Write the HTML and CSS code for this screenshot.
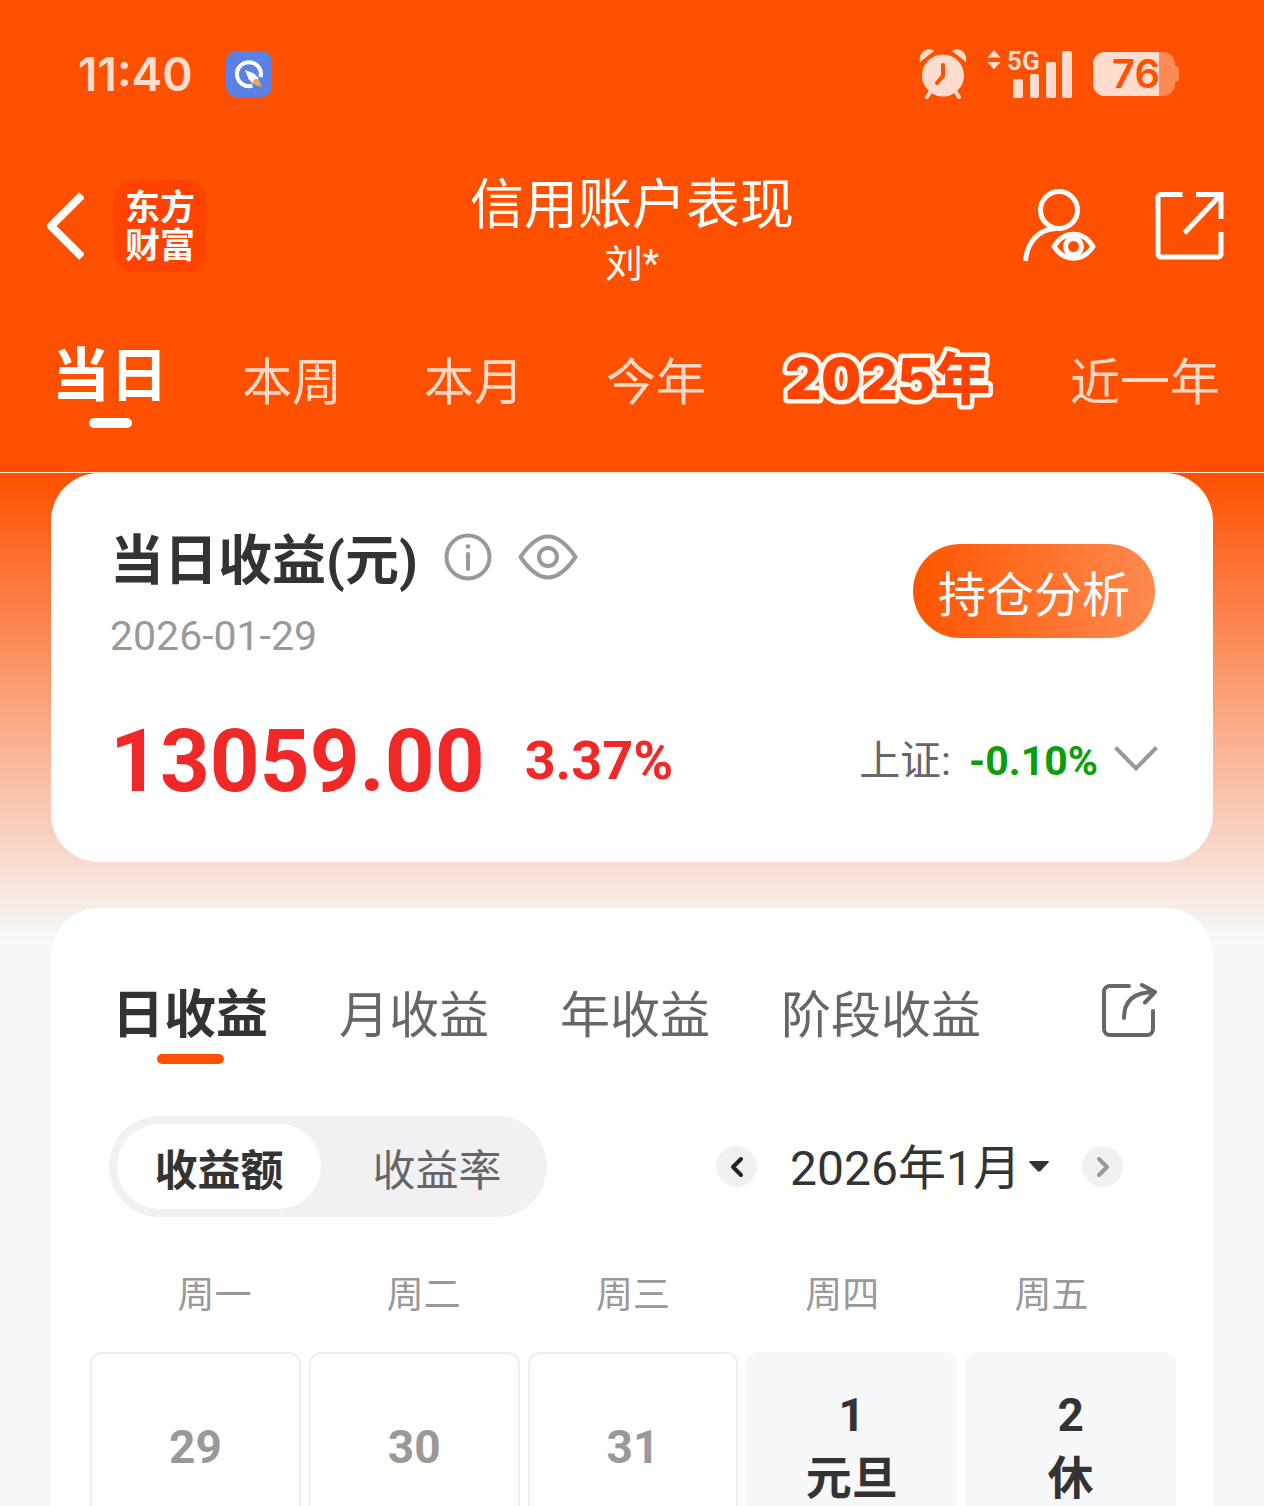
FILE: index.html
```html
<!DOCTYPE html>
<html lang="zh-CN">
<head>
<meta charset="utf-8">
<meta name="viewport" content="width=device-width, initial-scale=1">
<title>信用账户表现</title>
<link rel="stylesheet" href="styles.css">
</head>
<body>
<div class="app">
  <header class="top">
    <div class="status">
      <div class="status-side">
        <span class="clock">11:40</span>
        <svg class="app-badge" width="48" height="48" viewBox="0 0 48 48" aria-hidden="true">
          <rect x="1" y="1" width="46" height="46" rx="11" fill="#5a82e6"/>
          <path d="M27.5 35.6A12 12 0 1 1 35.6 27" fill="none" stroke="#fff" stroke-width="4"/>
          <path d="M20 20l9 3.500 5 5-5.500 5.500-5-5z" fill="#fff"/>
          <path d="M28 32c0-3 4-4 6-1.500 1.500 2 2 4 2.500 6.500-3-.4-8-1.500-8.500-5z" fill="#e8a94d"/>
        </svg>
      </div>
      <div class="status-side status-right">
        <svg width="48" height="52" viewBox="0 0 48 52" aria-hidden="true">
          <g fill="#ffdccd"><circle cx="24" cy="27.500" r="21"/>
          <path d="M1 14C-1 5 8-2 15 3zM47 14C49 5 40-2 33 3z"/></g>
          <path d="M12 43l-4 6M36 43l4 6" stroke="#ffdccd" stroke-width="4" stroke-linecap="round"/>
          <path d="M24 17v11l-6 7" fill="none" stroke="#ff5000" stroke-width="4" stroke-linecap="round" stroke-linejoin="round"/>
        </svg>
        <div class="signal">
          <svg width="14" height="20" viewBox="0 0 14 20" fill="#ffdccd" aria-hidden="true"><path d="M7 0l6.500 7.500H.5zM7 19.500L.5 12h13z"/></svg>
          <span class="net">5G</span>
          <svg class="bars" width="60" height="48" viewBox="0 0 60 48" fill="#ffdccd" aria-hidden="true"><rect x="0" y="29" width="10" height="19" rx="2"/><rect x="17" y="24" width="9" height="24" rx="2"/><rect x="33" y="12" width="10" height="36" rx="2"/><rect x="49" y="1" width="10" height="47" rx="2"/></svg>
        </div>
        <div class="battery"><span>76</span></div>
      </div>
    </div>
    <div class="nav">
      <div class="nav-side">
        <button class="icon-btn" aria-label="返回"><svg width="44" height="70" viewBox="0 0 44 70" fill="none" stroke="#fff" stroke-width="8" stroke-linejoin="round"><path d="M42 4L11 35l31 31"/></svg></button>
        <a class="brand" href="#">东方<br>财富</a>
      </div>
      <div class="heading">
        <h1>信用账户表现</h1>
        <p>刘*</p>
      </div>
      <div class="nav-side nav-right">
        <button class="icon-btn" aria-label="账户"><svg width="76" height="76" viewBox="0 0 76 76" fill="none" stroke="#fff" stroke-width="5"><circle cx="39" cy="22" r="18.500"/><path d="M5.500 73C7 54 19 41 36 40.500"/><path d="M34 58.500C44 42 63 42 73 58.500 63 74 44 74 34 58.500z" stroke-linejoin="round"/><circle cx="53.500" cy="58.500" r="8"/></svg></button>
        <button class="icon-btn" aria-label="分享"><svg width="70" height="70" viewBox="0 0 70 70" fill="none" stroke="#fff" stroke-width="5"><path d="M28.500 3.500H7a3 3 0 0 0-3 3V63a3 3 0 0 0 3 3h57a3 3 0 0 0 3-3V41M42 3.500h25V28M67 3.500L30.500 42"/></svg></button>
      </div>
    </div>
    <nav class="periods">
      <a class="period active" href="#">当日</a>
      <a class="period" href="#">本周</a>
      <a class="period" href="#">本月</a>
      <a class="period" href="#">今年</a>
      <a class="period special" href="#"><svg width="210" height="76" viewBox="0 0 210 76"><text x="2" y="59">2025年</text></svg></a>
      <a class="period" href="#">近一年</a>
    </nav>
  </header>

  <main class="content">
    <section class="card summary">
      <div class="summary-head">
        <div>
          <div class="title-row">
            <h2>当日收益(元)</h2>
            <button class="icon-btn" aria-label="说明"><svg width="48" height="48" viewBox="0 0 48 48" fill="none" stroke="#999" stroke-width="4"><circle cx="24" cy="24" r="21.500"/><path d="M24 21v15" stroke-linecap="round"/><circle cx="24" cy="13.500" r="2.300" fill="#999" stroke="none"/></svg></button>
            <button class="icon-btn" aria-label="隐藏金额"><svg width="60" height="48" viewBox="0 0 60 48" fill="none" stroke="#999" stroke-width="4"><path d="M2.500 24C8 16 18 3.500 30 3.500S52 16 57.500 24C52 32 42 44.500 30 44.500S8 32 2.500 24z" stroke-linejoin="round"/><circle cx="30" cy="24" r="9"/></svg></button>
          </div>
          <p class="date">2026-01-29</p>
        </div>
        <button class="analyse">持仓分析</button>
      </div>
      <div class="figures">
        <span class="amount">13059.00</span>
        <span class="rate">3.37%</span>
        <button class="index">上证: <strong>-0.10%</strong><svg width="44" height="32" viewBox="0 0 44 32" fill="none" stroke="#999" stroke-width="4"><path d="M1.500 2.500L22 23.500 42.500 2.500"/></svg></button>
      </div>
    </section>

    <section class="card earnings">
      <div class="earn-head">
        <nav class="earn-tabs">
          <a class="earn-tab active" href="#">日收益</a>
          <a class="earn-tab" href="#">月收益</a>
          <a class="earn-tab" href="#">年收益</a>
          <a class="earn-tab" href="#">阶段收益</a>
        </nav>
        <button class="icon-btn" aria-label="分享收益"><svg width="56" height="56" viewBox="0 0 56 56" fill="none" stroke="#666" stroke-width="4" stroke-linecap="round" stroke-linejoin="round"><path d="M28 3H9a6 6 0 0 0-6 6v37a6 6 0 0 0 6 6h37a6 6 0 0 0 6-6V28"/><path d="M23 35C23 19 32 9 53 9M41 2l13 7-10 10.500"/></svg></button>
      </div>
      <div class="controls">
        <div class="segment">
          <button class="seg active">收益额</button>
          <button class="seg">收益率</button>
        </div>
        <div class="month">
          <button class="step" aria-label="上个月"><svg width="14" height="22" viewBox="0 0 14 22" fill="none" stroke="#222" stroke-width="4" stroke-linecap="round" stroke-linejoin="round"><path d="M11 3L3 11l8 8"/></svg></button>
          <label class="month-pick">
            <select aria-label="月份"><option>2026年1月</option></select>
            <svg width="20" height="12" viewBox="0 0 20 12" fill="#333"><path d="M1 0h18q1.500 0 .5 1.500l-8 8.500q-1.500 1-3 0l-8-8.500Q-.5 0 1 0z"/></svg>
          </label>
          <button class="step" aria-label="下个月"><svg width="14" height="22" viewBox="0 0 14 22" fill="none" stroke="#999" stroke-width="4" stroke-linecap="round" stroke-linejoin="round"><path d="M3 3l8 8-8 8"/></svg></button>
        </div>
      </div>
      <div class="weekdays"><span>周一</span><span>周二</span><span>周三</span><span>周四</span><span>周五</span></div>
      <div class="days">
        <div class="day outside">29</div>
        <div class="day outside">30</div>
        <div class="day outside">31</div>
        <div class="day"><span>1</span><span>元旦</span></div>
        <div class="day"><span>2</span><span>休</span></div>
      </div>
    </section>
  </main>
</div>
</body>
</html>
```

FILE: styles.css
```css
* { box-sizing: border-box; }
body {
  margin: 0;
  background: #f7f8fa;
  color: #333;
  font-family: Roboto, "Noto Sans CJK SC", sans-serif;
}
h1, h2, p { margin: 0; }
a { color: inherit; text-decoration: none; }
button, select {
  margin: 0;
  padding: 0;
  border: 0;
  background: none;
  color: inherit;
  font: inherit;
}
svg { display: block; flex: none; }
.icon-btn { display: flex; }

.app { display: flex; flex-direction: column; height: 100vh; }

/* Header */
.top {
  flex: none;
  background: #ff5000;
  border-bottom: 1px solid #ffe3d6;
  color: #fff;
}
.status {
  display: flex;
  justify-content: space-between;
  align-items: center;
  height: 148px;
  padding: 0 89px 0 78px;
  color: #ffdccd;
}
.status-side { display: flex; align-items: center; gap: 32px; }
.status-right { gap: 20px; }
.clock { font: 600 46px/64px Inter, sans-serif; }
.signal { display: grid; grid-template-columns: 14px 66px; column-gap: 6px; }
.signal > * { grid-row: 1; }
.net { grid-column: 2; font: 700 26px/22px Roboto, sans-serif; }
.bars { grid-column: 2; justify-self: end; }
.battery {
  position: relative;
  width: 82px;
  height: 44px;
  padding-left: 4px;
  border-radius: 12px;
  background: linear-gradient(to right, #ffdccd 66px, #ff8a55 66px);
  color: #ff5000;
  font: 600 40px/44px Inter, sans-serif;
  text-align: center;
}
.battery::after {
  content: "";
  position: absolute;
  top: 14px;
  right: -4px;
  width: 4px;
  height: 16px;
  border-radius: 0 4px 4px 0;
  background: #ff8a55;
}
.nav {
  display: grid;
  grid-template-columns: 1fr auto 1fr;
  align-items: center;
  height: 156px;
  padding: 0 40px;
}
.nav-side { display: flex; align-items: center; gap: 30px; }
.nav-right { justify-content: flex-end; gap: 58px; }
.brand {
  width: 92px;
  height: 92px;
  padding: 10px 0;
  border-radius: 20px;
  background: #ff4200;
  font-size: 35px;
  font-weight: 700;
  line-height: 38px;
  text-align: center;
}
.heading { padding-top: 12px; text-align: center; }
.heading h1 { font-size: 54px; font-weight: 400; line-height: 64px; }
.heading p { font-size: 38px; line-height: 52px; }
.periods {
  display: flex;
  gap: 82px;
  height: 168px;
  padding: 36px 0 0 52px;
  overflow: hidden;
}
.period { flex: none; color: #ffd9c7; font-size: 50px; line-height: 86px; white-space: nowrap; }
.period.active { margin-right: -8px; color: #fff; font-size: 58px; font-weight: 700; line-height: 72px; }
.period.active::after,
.earn-tab.active::after {
  content: "";
  display: block;
  width: 43px;
  height: 10px;
  margin: 6px auto 0;
  border-radius: 5px;
  background: #fff;
}
.period.special { margin: 0 -5px; }
.special svg { overflow: visible; }
.special text {
  fill: #ff4200;
  stroke: #fff8f0;
  stroke-width: 9px;
  stroke-linejoin: round;
  paint-order: stroke fill;
  font-family: Inter, "Noto Sans CJK SC", sans-serif;
  font-size: 56px;
  font-weight: 900;
}

/* Scrolling content */
.content {
  flex: 1;
  min-height: 0;
  overflow: hidden auto;
  scrollbar-width: none;
  padding: 0 51px 46px;
  background: linear-gradient(#ff5000, #f7f8fa 468px);
}
.card { border-radius: 48px; background: #fff; }
.summary { height: 389px; padding: 48px 55px 0 59px; }
.summary-head { display: flex; justify-content: space-between; align-items: flex-start; }
.title-row { display: flex; align-items: center; gap: 26px; height: 72px; }
.title-row h2 { padding-top: 10px; font-size: 54px; font-weight: 700; line-height: 72px; }
.date { color: #999; font-size: 41px; line-height: 86px; }
.analyse {
  width: 242px;
  height: 94px;
  margin: 23px 3px 0 0;
  border-radius: 47px;
  background: linear-gradient(to right, #ff5500, #ff8a50);
  color: #fff;
  font-size: 48px;
}
.figures { display: flex; align-items: center; margin-top: 30px; line-height: 104px; }
.amount { color: #f12828; font-size: 87px; font-weight: 700; }
.rate { margin-left: 40px; color: #f12828; font-size: 54px; font-weight: 700; }
.index { display: flex; align-items: center; margin-left: auto; color: #666; font-size: 41px; line-height: 52px; }
.index strong { margin: 0 16px 0 18px; color: #0a9e0a; }

.earnings { margin-top: 46px; padding: 75px 37px 40px 39px; }
.earn-head { display: flex; justify-content: space-between; align-items: flex-start; padding: 0 19px 0 22px; }
.earn-tabs { display: flex; gap: 71px; }
.earn-tab { color: #666; font-size: 50px; line-height: 66px; }
.earn-tab.active { color: #333; font-size: 52px; font-weight: 700; }
.earn-tab.active::after { width: 67px; margin-top: 5px; background: #ff5000; }
.controls { display: flex; justify-content: space-between; align-items: center; margin-top: 52px; padding: 0 53px 0 19px; }
.segment { display: flex; width: 438px; padding: 8px; border-radius: 51px; background: #f1f1f4; }
.seg { flex: 1; height: 85px; padding-left: 14px; border-radius: 43px; color: #666; font-size: 43px; }
.seg.active { flex: none; width: 204px; padding-left: 0; background: #fff; color: #333; font-weight: 700; }
.month { display: flex; align-items: center; gap: 33px; }
.step { display: grid; place-items: center; width: 41px; height: 41px; border-radius: 50%; background: #f1f1f4; }
.month-pick { display: flex; align-items: center; gap: 8px; }
.month-pick select { appearance: none; padding-top: 4px; font-size: 48px; line-height: 64px; }
.weekdays {
  display: grid;
  grid-template-columns: repeat(5, 1fr);
  margin-top: 53px;
  padding: 0 20px;
  color: #999;
  font-size: 37px;
  line-height: 52px;
  text-align: center;
}
.days { display: grid; grid-template-columns: repeat(5, 1fr); gap: 8px; margin-top: 30px; }
.day {
  display: flex;
  flex-direction: column;
  justify-content: center;
  align-items: center;
  height: 190px;
  border-radius: 12px;
  background: #f7f8fa;
  font-size: 46px;
  font-weight: 700;
  line-height: 63px;
}
.day.outside { border: 2px solid #eee; background: #fff; color: #999; }
```
